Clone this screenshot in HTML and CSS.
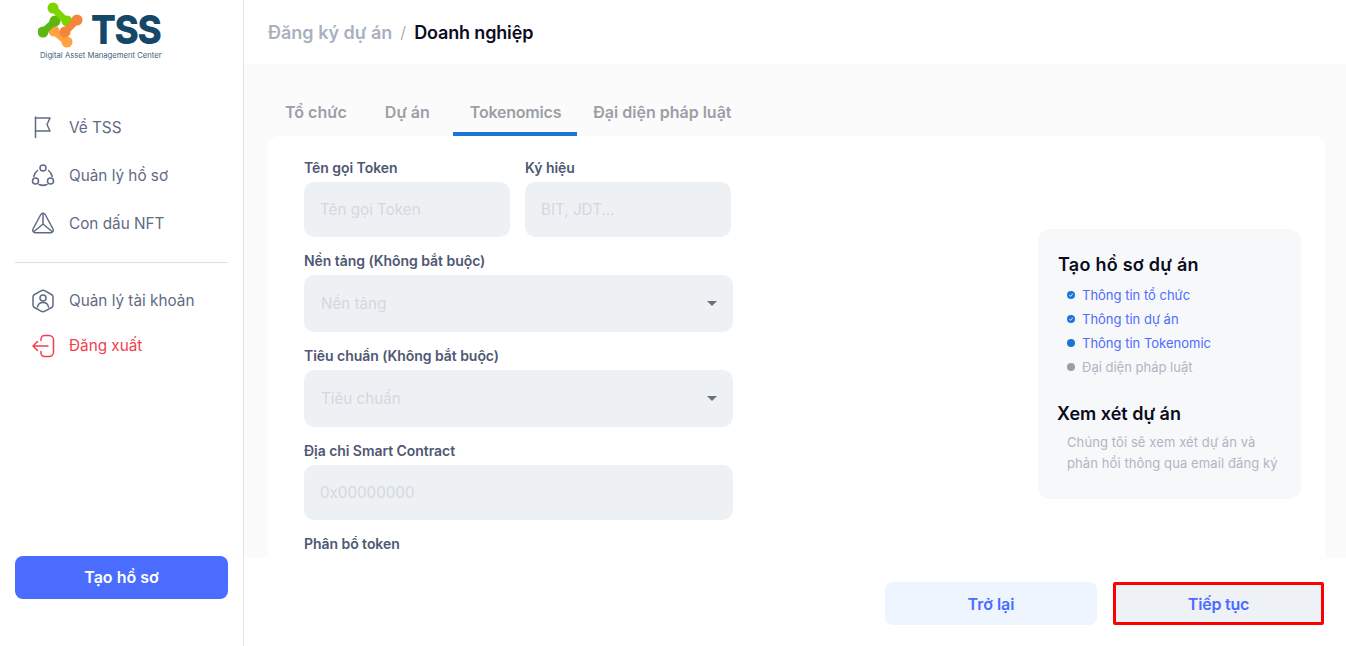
FILE: index.html
```html
<!DOCTYPE html>
<html lang="vi">
<head>
<meta charset="utf-8">
<title>TSS</title>
<link rel="stylesheet" href="styles.css">
</head>
<body>
<div class="app">
  <aside class="sidebar">
    <div class="logo">
      <div class="logo-top">
        <svg class="logo-mark" width="52" height="50" viewBox="0 0 52 50" fill="none" stroke-linecap="round">
          <g stroke="#ffa23f" fill="#ffa23f"><path d="M16 31 L29 42" stroke-width="7"/><circle cx="16" cy="31" r="5.500" stroke="none"/><circle cx="29" cy="42" r="5.500" stroke="none"/></g>
          <g stroke="#5cb80f" fill="#5cb80f"><path d="M17 21 L5 32" stroke-width="7"/><circle cx="5" cy="32" r="5.500" stroke="none"/><circle cx="17" cy="21" r="5.500" stroke="none"/></g>
          <g stroke="#7fd300" fill="#7fd300"><path d="M15 8 L29 22" stroke-width="7"/><circle cx="15" cy="8" r="5.500" stroke="none"/><circle cx="29" cy="21" r="5.500" stroke="none"/></g>
          <g stroke="#f5853a" fill="#f5853a"><path d="M39 20 L27 32" stroke-width="7"/><circle cx="39" cy="20" r="5.500" stroke="none"/><circle cx="27" cy="32" r="5.500" stroke="none"/></g>
        </svg>
        <span class="logo-name">TSS</span>
      </div>
      <div class="logo-sub">Digital Asset Management Center</div>
    </div>
    <nav class="nav">
      <a class="nav-item">
        <svg class="nav-icon" width="24" height="24" viewBox="0 0 24 24" fill="none" stroke="#5f6b85" stroke-width="1.5" stroke-linecap="round" stroke-linejoin="round"><path d="M4.500 2V22.500"/><path d="M4.500 3H19L16 9.500L19 16H4.500"/></svg>
        <span>Về TSS</span>
      </a>
      <a class="nav-item">
        <svg class="nav-icon" width="24" height="24" viewBox="0 0 24 24" fill="none" stroke="#5f6b85" stroke-width="1.500" stroke-linecap="round"><circle cx="12" cy="5" r="3"/><circle cx="4.500" cy="18" r="3"/><circle cx="19.500" cy="18" r="3"/><path d="M6.500 7.500A10 10 0 0 0 2.800 13.500"/><path d="M17.500 7.500A10 10 0 0 1 21.200 13.500"/><path d="M8 21.500A10 10 0 0 0 16 21.500"/></svg>
        <span>Quản lý hồ sơ</span>
      </a>
      <a class="nav-item">
        <svg class="nav-icon" width="24" height="24" viewBox="0 0 24 24" fill="none" stroke="#5f6b85" stroke-width="1.500" stroke-linecap="round" stroke-linejoin="round"><path d="M9.800 3.500a2.500 2.500 0 0 1 4.400 0l7.800 14.500a2.500 2.500 0 0 1-2.200 3.700H4.200A2.500 2.500 0 0 1 2 18z"/><path d="M12 2.500V13L3 20.500M12 13l9 7.500"/></svg>
        <span>Con dấu NFT</span>
      </a>
      <hr class="nav-sep">
      <a class="nav-item nav-item-short">
        <svg class="nav-icon" width="24" height="24" viewBox="0 0 24 24" fill="none" stroke="#5f6b85" stroke-width="1.500" stroke-linecap="round" stroke-linejoin="round"><path d="M10 1.800a4 4 0 0 1 4 0l6.500 3.700a3 3 0 0 1 1.500 2.600v7.800a3 3 0 0 1-1.500 2.600L14 22.200a4 4 0 0 1-4 0l-6.500-3.700A3 3 0 0 1 2 15.900V8.100a3 3 0 0 1 1.500-2.600z"/><circle cx="12" cy="9" r="3"/><path d="M6.500 18c.5-3 2.500-4.500 5.500-4.500s5 1.500 5.500 4.500"/></svg>
        <span>Quản lý tài khoản</span>
      </a>
      <a class="nav-item nav-item-short nav-item-danger">
        <svg class="nav-icon" width="24" height="24" viewBox="0 0 24 24" fill="none" stroke="#f23d4f" stroke-width="1.500" stroke-linecap="round" stroke-linejoin="round"><path d="M10 6.500V5a3.500 3.500 0 0 1 3.500-3.500H18A4.500 4.500 0 0 1 22.500 6v12a4.500 4.500 0 0 1-4.500 4.500h-4.500A3.500 3.500 0 0 1 10 19v-1.500"/><path d="M17 12H2M6.500 7.500L2 12l4.500 4.500"/></svg>
        <span>Đăng xuất</span>
      </a>
    </nav>
    <button class="create-btn">Tạo hồ sơ</button>
  </aside>

  <main class="main">
    <header class="crumbs">
      <span class="crumb-muted">Đăng ký dự án</span>
      <span class="crumb-sep">/</span>
      <span class="crumb-current">Doanh nghiệp</span>
    </header>

    <section class="content">
      <div class="tabs">
        <span class="tab tab-1">Tổ chức</span>
        <span class="tab tab-2">Dự án</span>
        <span class="tab tab-3 tab-active">Tokenomics</span>
        <span class="tab tab-4">Đại diện pháp luật</span>
      </div>
      <div class="card">
        <form class="form">
          <div class="row">
            <div class="field">
              <label class="label">Tên gọi Token</label>
              <div class="input">Tên gọi Token</div>
            </div>
            <div class="field">
              <label class="label">Ký hiệu</label>
              <div class="input">BIT, JDT...</div>
            </div>
          </div>
          <div class="field">
            <label class="label">Nền tảng (Không bắt buộc)</label>
            <div class="input select">Nền tảng<i class="caret"></i></div>
          </div>
          <div class="field">
            <label class="label">Tiêu chuẩn (Không bắt buộc)</label>
            <div class="input select">Tiêu chuẩn<i class="caret"></i></div>
          </div>
          <div class="field">
            <label class="label">Địa chỉ Smart Contract</label>
            <div class="input">0x00000000</div>
          </div>
          <div class="field">
            <label class="label">Phân bổ token</label>
          </div>
        </form>
        <div class="panel">
          <h3 class="panel-title panel-title-1">Tạo hồ sơ dự án</h3>
          <ul class="steps">
            <li class="step step-done"><svg class="dot" width="8" height="8" viewBox="0 0 8 8"><circle cx="4" cy="4" r="4" fill="#1a75d9"/><path d="M2.300 4.200L3.500 5.200L5.800 3" fill="none" stroke="#fff" stroke-width="1"/></svg>Thông tin tổ chức</li>
            <li class="step step-done"><svg class="dot" width="8" height="8" viewBox="0 0 8 8"><circle cx="4" cy="4" r="4" fill="#1a75d9"/><path d="M2.300 4.200L3.500 5.200L5.800 3" fill="none" stroke="#fff" stroke-width="1"/></svg>Thông tin dự án</li>
            <li class="step step-done"><svg class="dot" width="8" height="8" viewBox="0 0 8 8"><circle cx="4" cy="4" r="4" fill="#1a75d9"/></svg>Thông tin Tokenomic</li>
            <li class="step step-todo"><svg class="dot" width="8" height="8" viewBox="0 0 8 8"><circle cx="4" cy="4" r="4" fill="#9b9ea6"/></svg>Đại diện pháp luật</li>
          </ul>
          <h3 class="panel-title panel-title-2">Xem xét dự án</h3>
          <p class="panel-text">Chúng tôi sẽ xem xét dự án và phản hồi thông qua email đăng ký</p>
        </div>
      </div>
    </section>

    <footer class="actions">
      <button class="btn btn-back">Trở lại</button>
      <button class="btn btn-next">Tiếp tục</button>
    </footer>
  </main>
</div>
</body>
</html>
```

FILE: styles.css
```css
* { box-sizing: border-box; }
html, body { margin: 0; height: 100%; overflow: hidden; }
body { font-family: Inter, "Noto Sans", sans-serif; background: #fff; color: #0b0b20; }
.app { display: flex; height: 646px; }

.sidebar { width: 244px; flex: none; border-right: 1px solid #e3e3e3; padding: 0 15px 47px; display: flex; flex-direction: column; }
.logo { height: 103px; padding-left: 7px; }
.logo-top { display: flex; align-items: flex-start; height: 50px; }
.logo-mark { flex: none; margin-left: 16px; }
.logo-name { font-size: 40px; font-weight: 800; line-height: 29px; color: #154769; margin-top: 15px; margin-left: 1px; letter-spacing: -1.5px; transform: scaleX(0.92); transform-origin: left center; }
.logo-sub { font-size: 7.700px; color: #3f5f7d; margin-left: 18px; margin-top: 1px; line-height: 10px; white-space: nowrap; }

.nav { display: flex; flex-direction: column; }
.nav-item { display: flex; align-items: center; gap: 14px; height: 48px; padding-left: 16px; font-size: 15.300px; color: #5f6b85; }
.nav-item-short { height: 45px; }
.nav-item-danger { color: #f23d4f; }
.nav-icon { flex: none; }
.nav-sep { border: 0; border-top: 1px solid #e0e0e0; margin: 15px 0; width: 213px; }

.create-btn { margin-top: auto; height: 43px; width: 213px; border: 0; border-radius: 8px; background: #4a6cff; color: #fff; font: 600 16px Inter, sans-serif; padding: 0 0 2px; }

.main { flex: 1; min-width: 0; display: flex; flex-direction: column; }
.crumbs { height: 64px; flex: none; padding-left: 24px; display: flex; align-items: center; gap: 8px; font-size: 18px; font-weight: 600; }
.crumb-muted { color: #aab0c0; }
.crumb-sep { color: #aab0c0; font-weight: 400; font-size: 16px; }
.crumb-current { color: #0b0b20; letter-spacing: -0.15px; }

.content { flex: 1; min-height: 0; background: #fbfbfb; padding: 0 21px 0 24px; display: flex; flex-direction: column; overflow: hidden; }
.tabs { display: flex; height: 72px; flex: none; align-items: flex-end; }
.tab { height: 48px; padding: 0 17px; display: flex; align-items: center; font-size: 16px; font-weight: 600; color: #9c9fa8; }
.tab-2 { margin-left: 4px; }
.tab-3 { margin-left: 6px; padding-right: 16px; letter-spacing: -0.2px; }
.tab-4 { margin-left: -1px; }
.tab-active { box-shadow: inset 0 -4px 0 #1a75d9; border-radius: 4px 4px 0 0; }

.card { flex: 1; min-height: 0; background: #fff; border-radius: 12px 12px 0 0; padding: 24px 24px 0 36px; display: flex; justify-content: space-between; overflow: hidden; }
.form { width: 429px; flex: none; }
.row { display: flex; gap: 15px; }
.row .field { width: 206px; }
.field { margin-bottom: 16px; }
.label { display: block; font-size: 14px; letter-spacing: -0.05px; font-weight: 600; line-height: 16px; height: 22px; color: #4f5873; white-space: nowrap; }
.input { height: 55px; background: #eef1f4; border-radius: 10px; padding: 0 0 1px 16px; display: flex; align-items: center; font-size: 15.200px; color: #d3d8e0; }
.select { height: 57px; padding-left: 17px; padding-right: 16px; justify-content: space-between; }
.caret { width: 0; height: 0; border-left: 5.500px solid transparent; border-right: 5.500px solid transparent; border-top: 5px solid #6b7280; }

.panel { width: 263px; height: 270px; flex: none; margin-top: 69px; background: #f7f8fa; border-radius: 12px; padding: 25px 20px 0 20px; }
.panel-title { margin: 0; font-size: 18px; line-height: 22px; font-weight: 600; color: #0b0b20; }
.panel-title-1 { letter-spacing: 0.25px; }
.panel-title-2 { margin-top: 24px; margin-left: -1px; }
.steps { list-style: none; margin: 7px 0 0; padding: 0 0 0 9px; }
.step { display: flex; align-items: center; gap: 7px; height: 24px; font-size: 13px; }
.step-done { color: #4e6cff; }
.step-todo { color: #b0b5c3; }
.dot { flex: none; }
.panel-text { margin: 7px 0 0 9px; font-size: 13px; letter-spacing: 0.1px; line-height: 21px; color: #b0b5c3; }

.actions { height: 88px; flex: none; padding: 24px 22px 0 0; display: flex; justify-content: flex-end; align-items: flex-start; gap: 16px; background: #fff; }
.btn { height: 43px; border: 0; font: 600 16px Inter, sans-serif; color: #4a6cff; }
.btn-back { width: 212px; background: #eef5fe; border-radius: 8px; }
.btn-next { width: 211px; background: #eef1f5; border: 3px solid #f00; border-radius: 2px; letter-spacing: -0.2px; }
```
